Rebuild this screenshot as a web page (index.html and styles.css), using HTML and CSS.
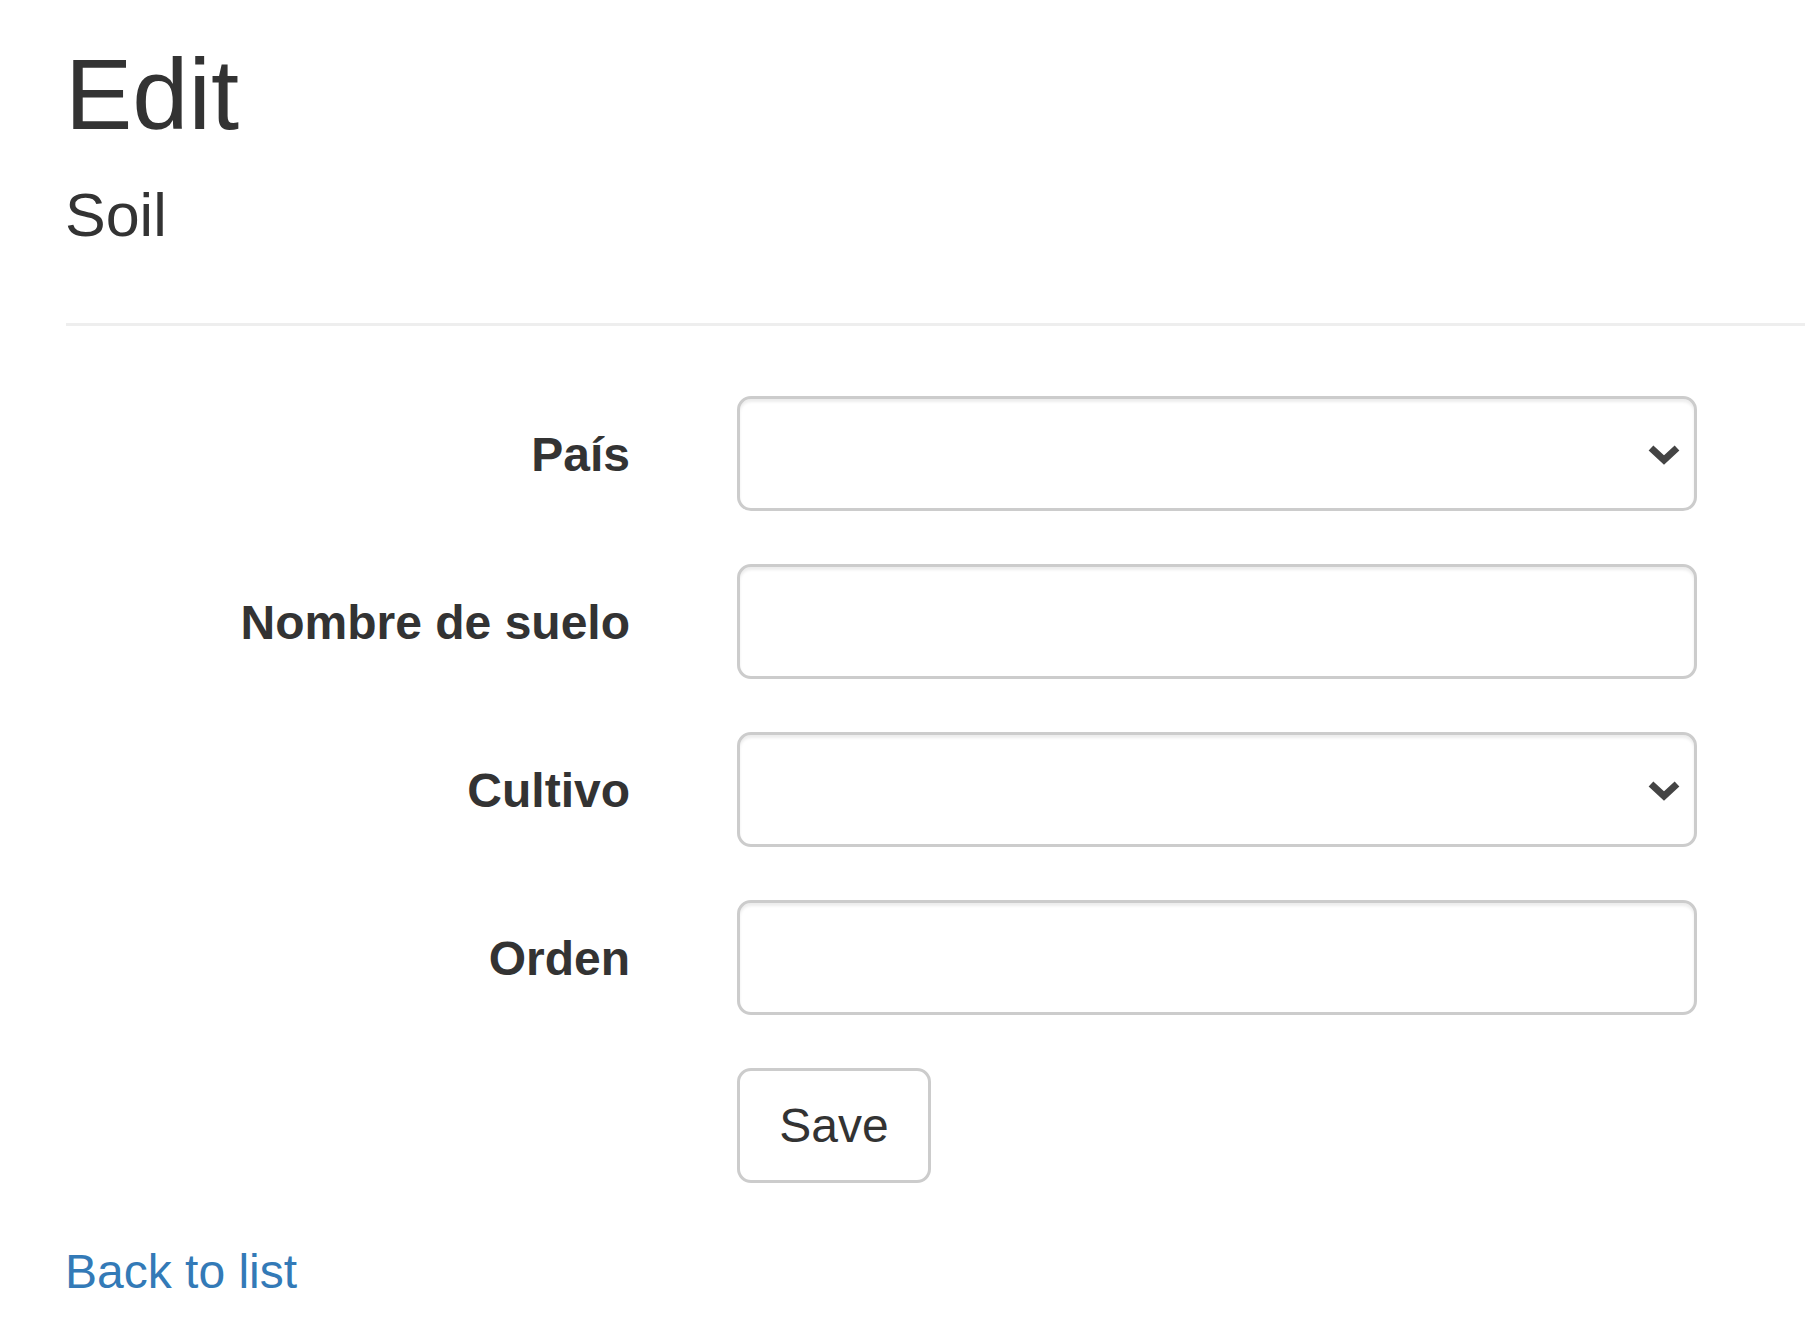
FILE: index.html
```html
<!DOCTYPE html>
<html lang="es">
<head>
<meta charset="utf-8">
<title>Edit - Soil</title>
<link rel="stylesheet" href="styles.css">
</head>
<body>
<div class="page">
  <h1 class="title">Edit</h1>
  <h2 class="subtitle">Soil</h2>
  <hr class="divider">
  <form class="form">
    <div class="row">
      <label class="label" for="pais">País</label>
      <div class="select-wrap">
        <select class="control select" id="pais"><option></option></select>
        <svg class="chevron" viewBox="0 0 34 21" width="34" height="21"><path d="M4 4 L17 16 L30 4" fill="none" stroke="#444" stroke-width="7" stroke-linecap="butt" stroke-linejoin="miter"/></svg>
      </div>
    </div>
    <div class="row">
      <label class="label" for="nombre">Nombre de suelo</label>
      <input class="control" id="nombre" type="text">
    </div>
    <div class="row">
      <label class="label" for="cultivo">Cultivo</label>
      <div class="select-wrap">
        <select class="control select" id="cultivo"><option></option></select>
        <svg class="chevron" viewBox="0 0 34 21" width="34" height="21"><path d="M4 4 L17 16 L30 4" fill="none" stroke="#444" stroke-width="7" stroke-linecap="butt" stroke-linejoin="miter"/></svg>
      </div>
    </div>
    <div class="row">
      <label class="label" for="orden">Orden</label>
      <input class="control" id="orden" type="text">
    </div>
    <div class="row">
      <span class="label"></span>
      <div class="actions"><button class="btn" type="button">Save</button></div>
    </div>
  </form>
  <div class="back"><a class="link" href="#">Back to list</a></div>
</div>
</body>
</html>
```
FILE: styles.css
```css
html, body {
  margin: 0;
  padding: 0;
  background: #fff;
}
body {
  font-family: "Liberation Sans", Arial, sans-serif;
  color: #333;
  overflow: hidden;
}
.page {
  padding-left: 65px;
}
.title {
  margin: 44px 0 0 0;
  font-size: 101px;
  line-height: 101px;
  font-weight: 400;
  color: #333;
}
.subtitle {
  margin: 40px 0 0 0;
  font-size: 61px;
  line-height: 61px;
  font-weight: 400;
  color: #333;
}
.divider {
  margin: 77px 0 0 1px;
  border: 0;
  border-top: 3px solid #eee;
  height: 0;
}
.form {
  margin-top: 70px;
  display: flex;
  flex-direction: column;
  gap: 53px;
}
.row {
  display: grid;
  grid-template-columns: 565px 960px;
  column-gap: 107px;
  align-items: start;
}
.label {
  text-align: right;
  font-weight: 700;
  font-size: 48px;
  line-height: 68px;
  padding-top: 25px;
  color: #333;
}
.control {
  box-sizing: border-box;
  width: 960px;
  height: 115px;
  margin: 0;
  border: 3px solid #ccc;
  border-radius: 14px;
  background: #fff;
  box-shadow: inset 0 3px 3px rgba(0, 0, 0, 0.075);
  font-family: inherit;
  font-size: 48px;
  padding: 0 40px;
  color: #555;
  outline: none;
}
.select-wrap {
  display: grid;
  width: 960px;
}
.select {
  grid-area: 1 / 1;
  appearance: none;
  -webkit-appearance: none;
}
.chevron {
  grid-area: 1 / 1;
  justify-self: end;
  align-self: center;
  margin-right: 16px;
  margin-top: 1px;
  pointer-events: none;
}
.actions {
  display: flex;
}
.btn {
  box-sizing: border-box;
  width: 194px;
  height: 115px;
  border: 3px solid #ccc;
  border-radius: 14px;
  background: #fff;
  color: #333;
  font-family: inherit;
  font-size: 48px;
  padding: 0;
}
.back {
  margin-top: 55px;
  font-size: 48px;
  line-height: 68px;
}
.link {
  color: #337ab7;
  text-decoration: none;
}
```
